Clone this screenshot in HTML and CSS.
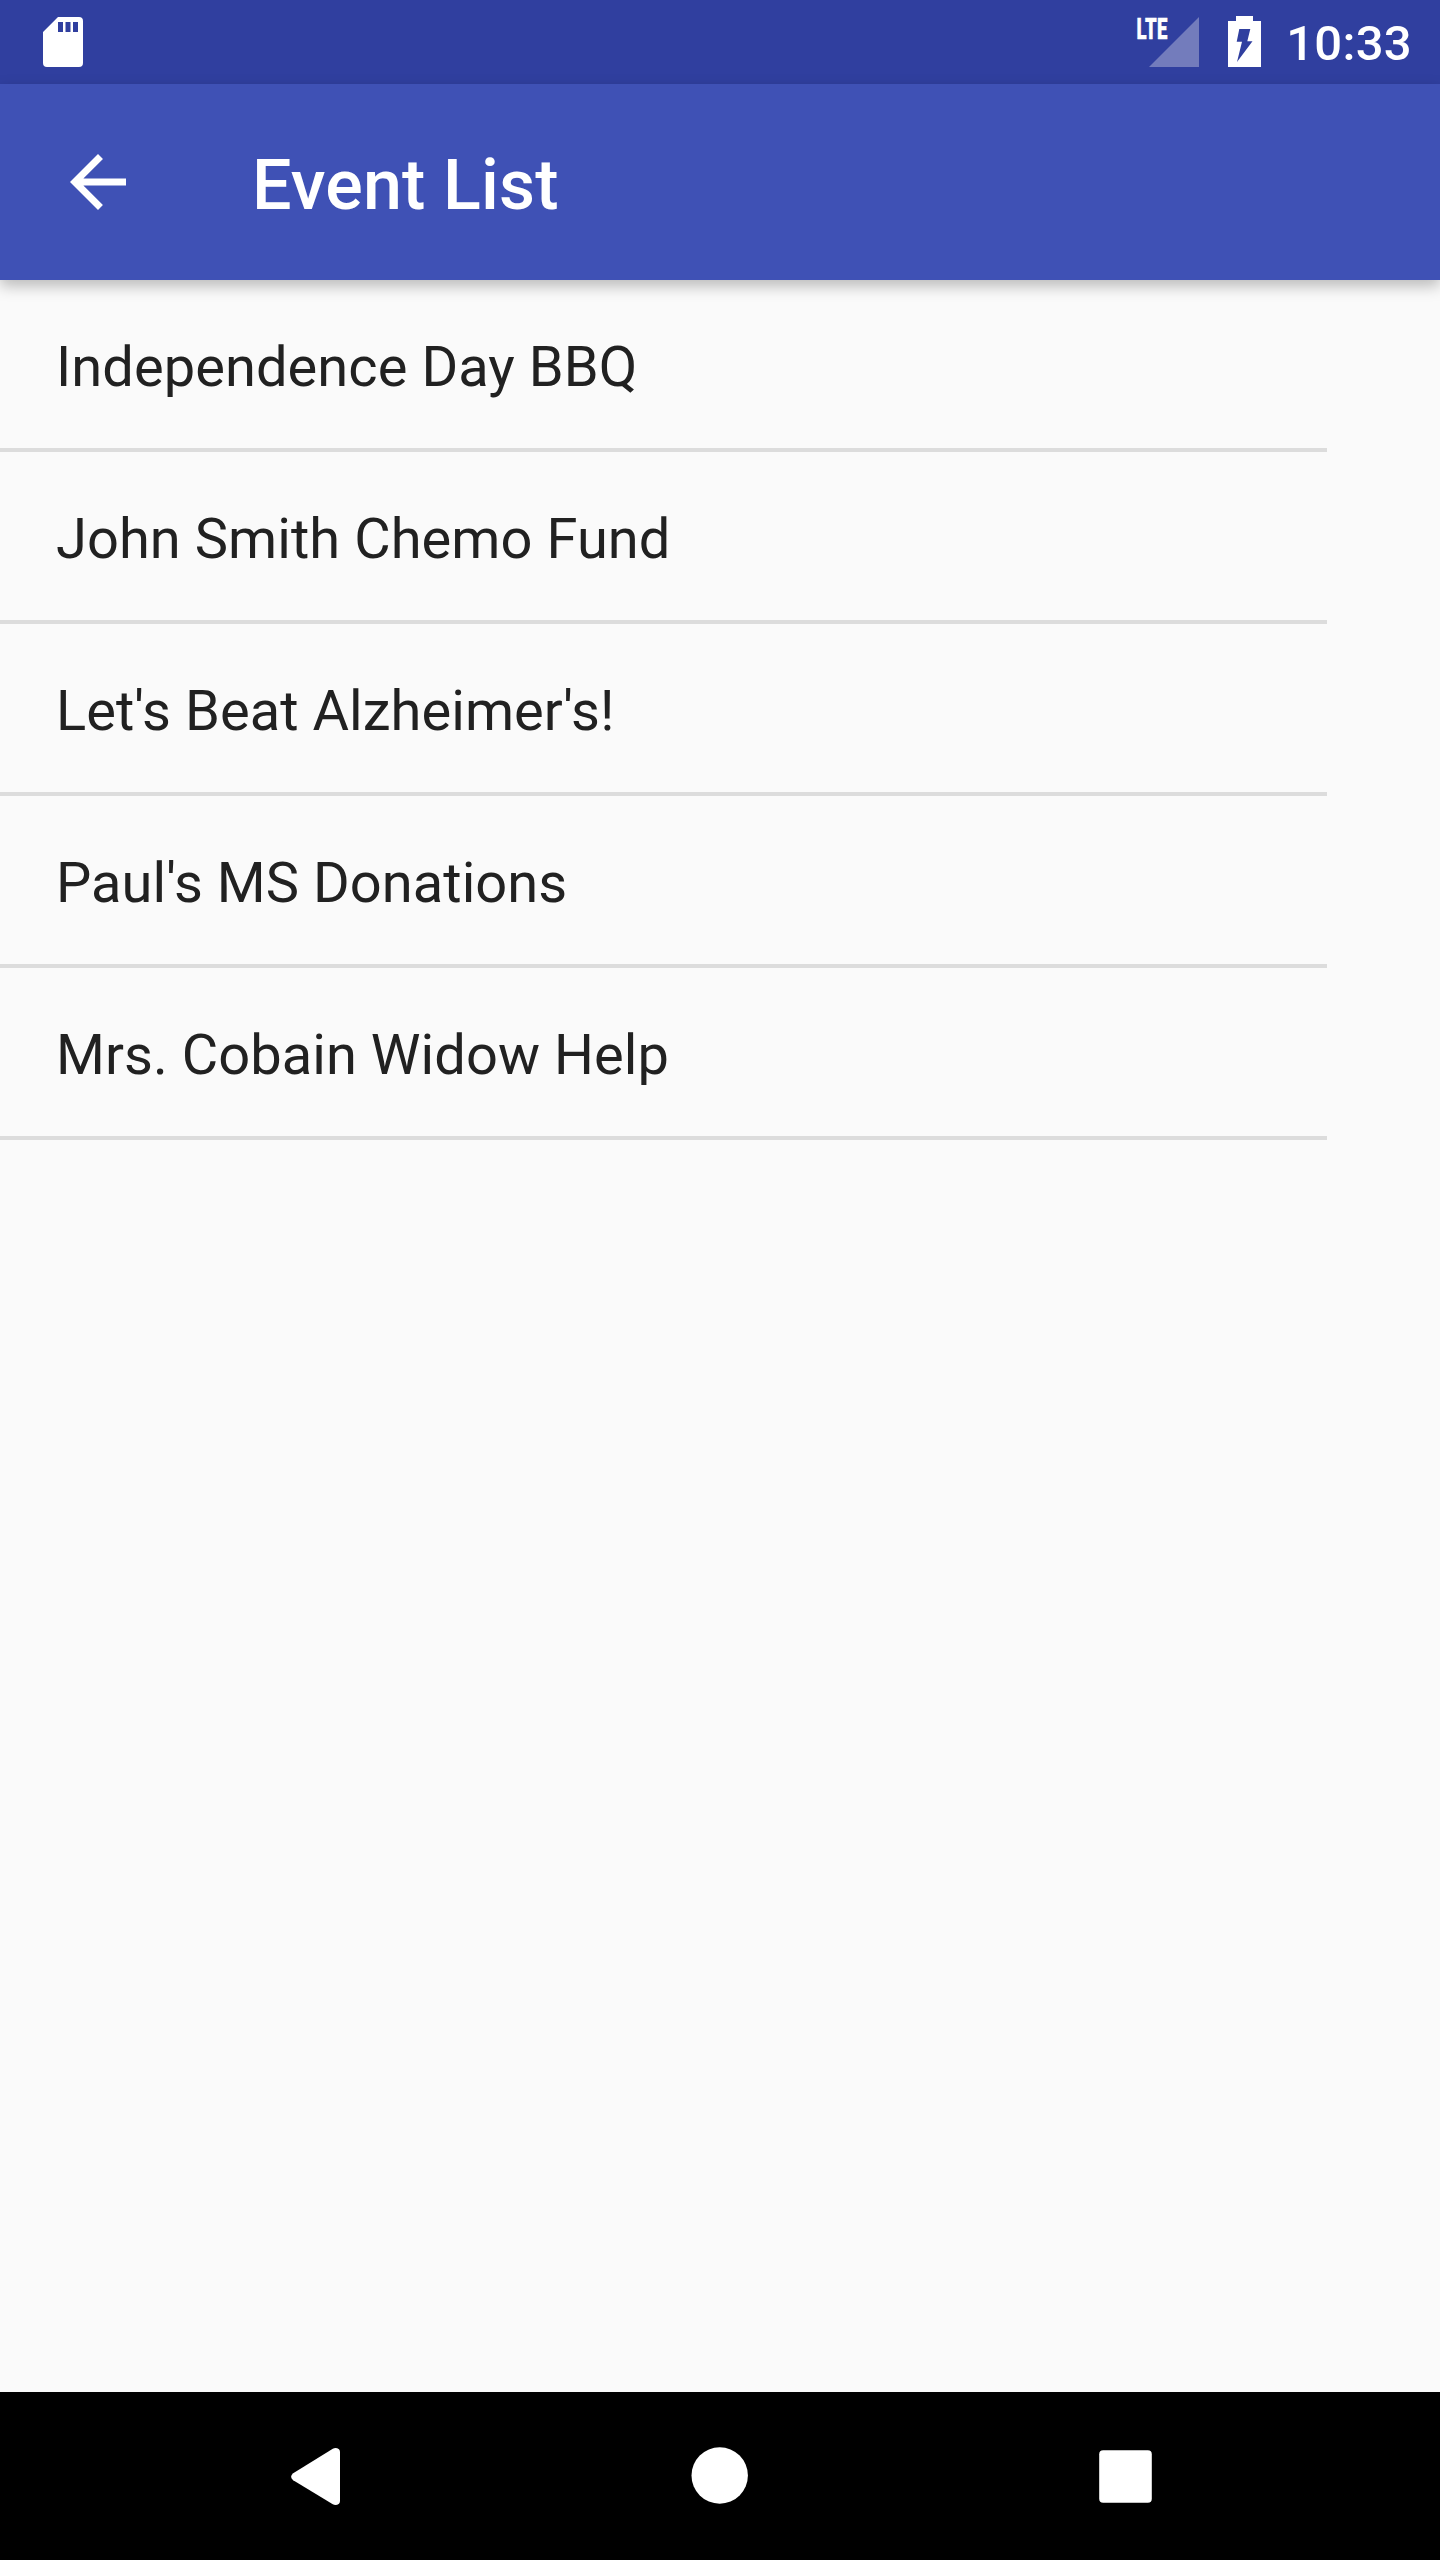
FILE: index.html
```html
<!DOCTYPE html>
<html lang="en">
<head>
<meta charset="utf-8">
<title>Event List</title>
<link rel="stylesheet" href="styles.css">
</head>
<body>
<div class="screen">
  <div class="status-bar">
    <svg class="sd-card" width="40" height="50" viewBox="0 0 40 50" aria-hidden="true">
      <path fill="#fff" fill-rule="evenodd" d="M15 0H36a4 4 0 0 1 4 4V46a4 4 0 0 1-4 4H4a4 4 0 0 1-4-4V15ZM15 5V15H20V5ZM22.5 5V15H27.5V5ZM30 5V15H35V5Z"/>
    </svg>
    <div class="status-icons">
      <svg class="signal" width="68" height="64" viewBox="0 0 68 64" aria-hidden="true">
        <path fill="#737cbc" d="M17 63 67 13V63Z"/>
        <text class="lte" transform="translate(4.4 35.3) scale(0.63 1)">LTE</text>
      </svg>
      <svg class="battery" width="33" height="51" viewBox="0 0 33 51" aria-hidden="true">
        <path fill="#fff" fill-rule="evenodd" d="M8 0H25V5H33V51H0V5H8ZM11.3 13 8.7 25.7H14L9 46 24.5 25.3H19.3L22.3 13Z"/>
      </svg>
      <span class="clock">10:33</span>
    </div>
  </div>
  <header class="toolbar">
    <svg class="back" width="84" height="84" viewBox="0 0 24 24" aria-hidden="true">
      <path fill="#fff" d="M20 11H7.83l5.59-5.59L12 4l-8 8 8 8 1.41-1.41L7.83 13H20v-2z"/>
    </svg>
    <h1 class="title">Event List</h1>
  </header>
  <main class="content">
    <ul class="events">
      <li class="event">Independence Day BBQ</li>
      <li class="event">John Smith Chemo Fund</li>
      <li class="event">Let's Beat Alzheimer's!</li>
      <li class="event">Paul's MS Donations</li>
      <li class="event">Mrs. Cobain Widow Help</li>
    </ul>
  </main>
  <nav class="nav-bar">
    <svg width="84" height="84" viewBox="0 0 84 84" aria-hidden="true">
      <path fill="#fff" d="M21.2 39.2 60.8 14.7Q64 13 67 15.3Q68 16.4 68 18V67Q68 68.6 67 69.7Q64 72 60.8 70.3L21.2 46.3Q17 42.8 21.2 39.2Z"/>
    </svg>
    <svg width="84" height="84" viewBox="0 0 84 84" aria-hidden="true">
      <circle cx="41.7" cy="41.5" r="28.2" fill="#fff"/>
    </svg>
    <svg width="84" height="84" viewBox="0 0 84 84" aria-hidden="true">
      <rect x="15.2" y="16.2" width="52.6" height="52.6" rx="4" fill="#fff"/>
    </svg>
  </nav>
</div>
</body>
</html>
```
FILE: styles.css
```css
* {
  box-sizing: border-box;
}

body {
  margin: 0;
  font-family: Roboto, sans-serif;
}

.screen {
  display: flex;
  flex-direction: column;
  width: 1440px;
  height: 2560px;
  background: #fafafa;
}

.status-bar {
  display: flex;
  justify-content: space-between;
  align-items: flex-start;
  height: 84px;
  padding: 0 28px 0 43px;
  background: #303f9f;
}

.sd-card {
  margin-top: 17px;
}

.status-icons {
  display: flex;
  align-items: flex-start;
}

.signal {
  margin: 4px 28.5px 0 0;
  overflow: visible;
}

.lte {
  font: 900 29.5px Roboto, sans-serif;
  letter-spacing: 0.5px;
  fill: #fff;
  stroke: #fff;
  stroke-width: 0.4px;
}

.battery {
  margin: 16px 25px 0 0;
}

.clock {
  color: #fff;
  font-size: 49px;
  font-weight: 500;
  line-height: 88px;
  letter-spacing: 0.3px;
}

.toolbar {
  display: flex;
  align-items: center;
  gap: 112px;
  height: 196px;
  padding-left: 56px;
  background: #3f51b5;
  box-shadow: 0 6px 14px rgba(0, 0, 0, 0.26);
}

.title {
  margin: 0;
  padding-top: 6px;
  color: #fff;
  font-size: 70px;
  font-weight: 500;
  line-height: 82px;
  letter-spacing: 0.15px;
}

.content {
  flex: 1;
}

.events {
  width: 1327px;
  margin: 0;
  padding: 0;
  list-style: none;
}

.event {
  height: 172px;
  padding: 6px 56px 0;
  border-bottom: 4px solid #dcdcdc;
  color: #212121;
  font-size: 56px;
  line-height: 162px;
  letter-spacing: 0.06px;
}

.nav-bar {
  display: grid;
  grid-template-columns: repeat(3, 406px);
  place-content: center;
  justify-items: center;
  height: 168px;
  background: #000;
}
```
